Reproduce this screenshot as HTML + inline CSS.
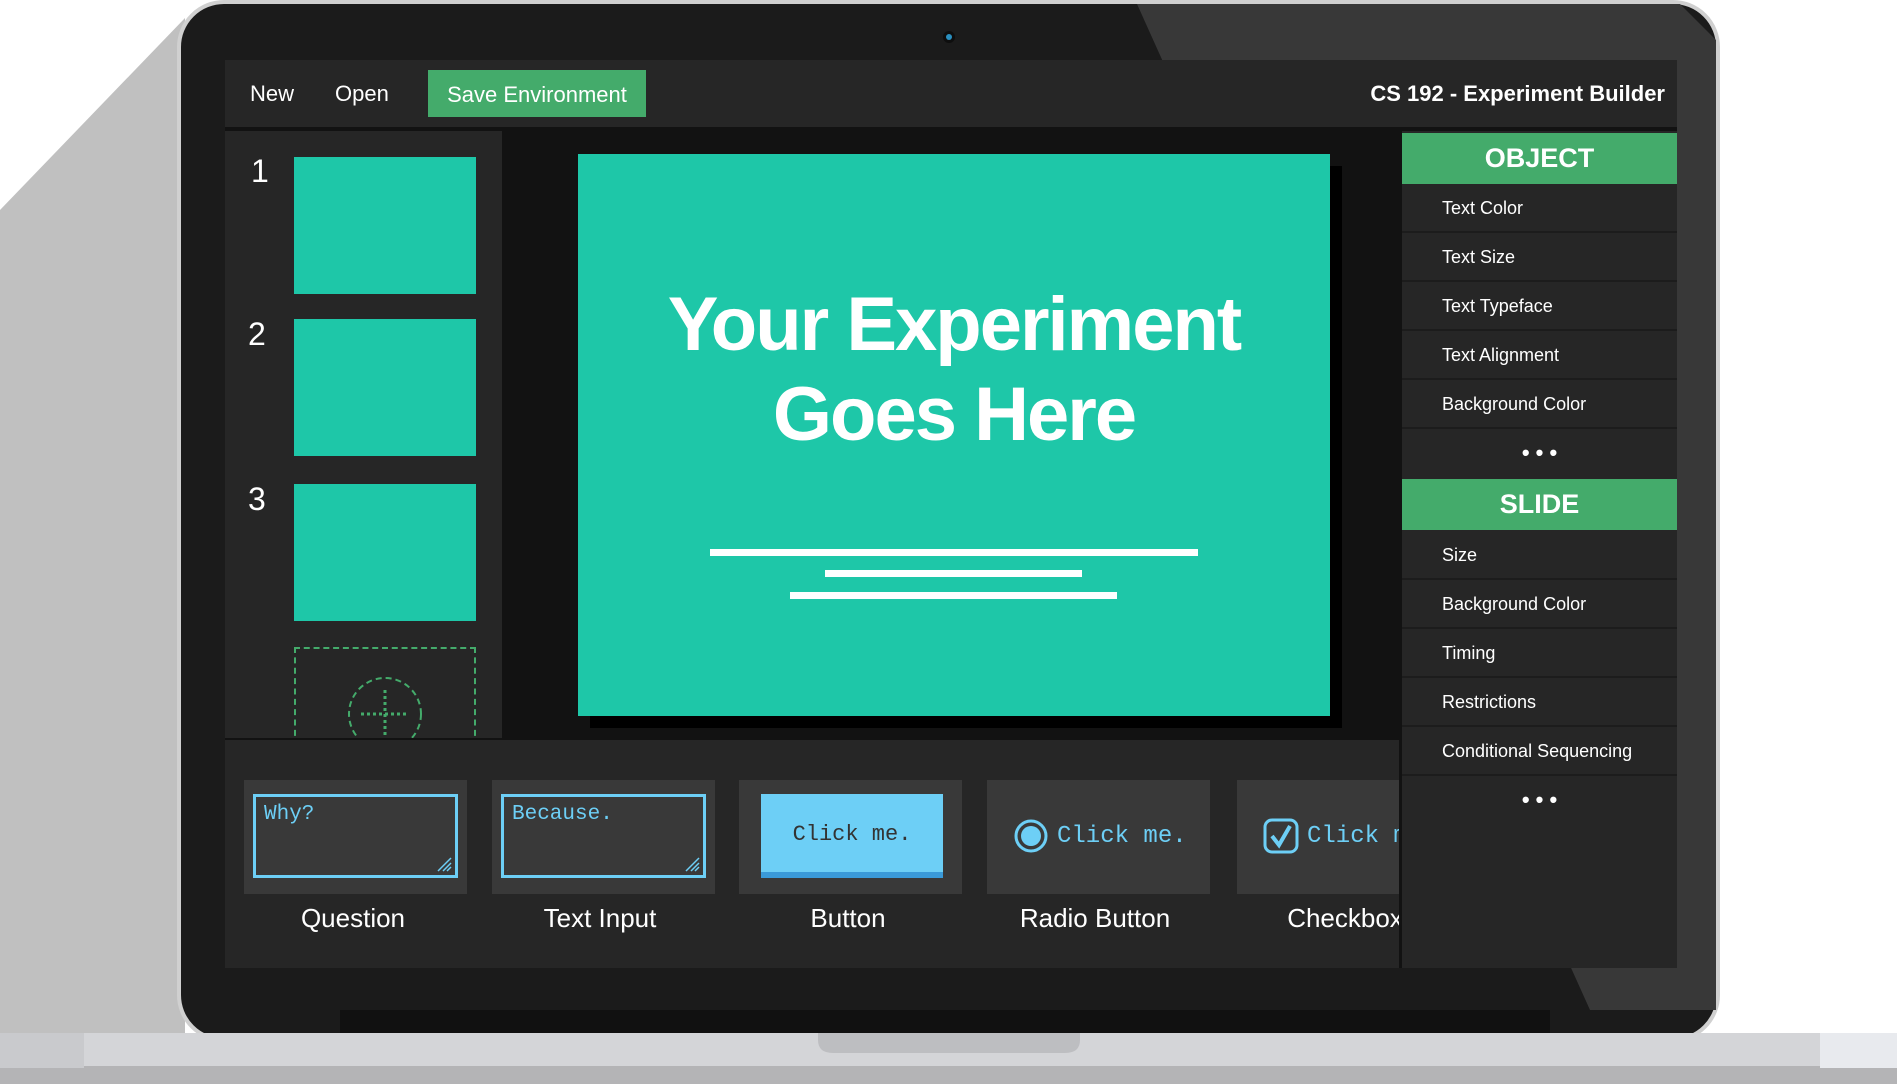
<!DOCTYPE html>
<html><head><meta charset="utf-8"><style>
*{margin:0;padding:0;box-sizing:border-box}
body{width:1897px;height:1084px;background:#fff;position:relative;overflow:hidden;font-family:"Liberation Sans",sans-serif;color:#fff}
.a{position:absolute}
.mono{font-family:"Liberation Mono",monospace;color:#6dcff6}
.row{position:absolute;left:0;width:275px;height:49px;border-bottom:2px solid #1c1c1c;font-size:18px;line-height:49px;padding-left:40px}
.card{position:absolute;top:780px;width:223px;height:114px;background:#393939}
.lbl{position:absolute;top:903px;width:250px;text-align:center;font-size:26px}
</style></head><body>
<svg class="a" style="left:0;top:0" width="1897" height="1084">
<polygon points="185,18 0,210 0,1040 185,1040" fill="#c0c0c0"/>
<rect x="179" y="2" width="1539" height="1038" rx="45" fill="#1b1b1b" stroke="#d0d0d0" stroke-width="4"/>
<polygon points="1137,4 1680,4 1716,40 1716,1010 1590,1010" fill="#383838"/>
<rect x="0" y="1033" width="1897" height="35" fill="#d4d5d8"/>
<rect x="0" y="1066" width="1897" height="18" fill="#b4b4b6"/>
<rect x="0" y="1033" width="84" height="35" fill="#c9cacd"/>
<rect x="1820" y="1033" width="77" height="35" fill="#e8eaee"/>
<path d="M818,1033 H1080 V1040 Q1080,1053 1065,1053 H833 Q818,1053 818,1040Z" fill="#bdbec1"/>
<rect x="340" y="1010" width="1210" height="23" fill="#111"/>
<circle cx="949" cy="37" r="6" fill="#0e0e0e"/><circle cx="949" cy="37" r="3" fill="#2a8fbf"/>
</svg>
<div class="a" style="left:225px;top:60px;width:1452px;height:908px;background:#121212"></div>
<div class="a" style="left:225px;top:60px;width:1452px;height:67px;background:#262626"></div>
<div class="a" style="left:250px;top:81px;font-size:22px">New</div>
<div class="a" style="left:335px;top:81px;font-size:22px">Open</div>
<div class="a" style="left:428px;top:70px;width:218px;height:47px;background:#44ab6b;font-size:22px;line-height:49px;text-align:center">Save Environment</div>
<div class="a" style="right:232px;top:81px;font-size:22px;font-weight:bold">CS 192 - Experiment Builder</div>
<div class="a" style="left:225px;top:131px;width:277px;height:607px;background:#262626;overflow:hidden">
<div class="a" style="left:26px;top:22px;font-size:32px">1</div>
<div class="a" style="left:23px;top:185px;font-size:32px">2</div>
<div class="a" style="left:23px;top:350px;font-size:32px">3</div>
<div class="a" style="left:69px;top:26px;width:182px;height:137px;background:#1ec7a8"></div>
<div class="a" style="left:69px;top:188px;width:182px;height:137px;background:#1ec7a8"></div>
<div class="a" style="left:69px;top:353px;width:182px;height:137px;background:#1ec7a8"></div>
<div class="a" style="left:69px;top:516px;width:182px;height:120px;border:2px dashed #44ab6b"></div>
<svg class="a" style="left:122px;top:545px" width="76" height="76"><circle cx="38" cy="38" r="36" fill="none" stroke="#44ab6b" stroke-width="2" stroke-dasharray="6 4"/><path d="M38 14V62M14 38H62" stroke="#44ab6b" stroke-width="3" stroke-dasharray="3 3"/></svg>
</div>
<div class="a" style="left:590px;top:166px;width:752px;height:562px;background:#000"></div>
<div class="a" style="left:578px;top:154px;width:752px;height:562px;background:#1ec7a8"></div>
<div class="a" style="left:578px;top:280px;width:752px;text-align:center;font-size:76px;font-weight:bold;line-height:90px;letter-spacing:-2px">Your Experiment<br>Goes Here</div>
<div class="a" style="left:710px;top:549px;width:488px;height:7px;background:#fff"></div>
<div class="a" style="left:825px;top:570px;width:257px;height:7px;background:#fff"></div>
<div class="a" style="left:790px;top:592px;width:327px;height:7px;background:#fff"></div>
<div class="a" style="left:1402px;top:131px;width:275px;height:837px;background:#262626">
<div class="a" style="left:0;top:2px;width:275px;height:51px;background:#44ab6b;font-size:27px;font-weight:bold;text-align:center;line-height:51px">OBJECT</div>
<div class="row" style="top:53px">Text Color</div>
<div class="row" style="top:102px">Text Size</div>
<div class="row" style="top:151px">Text Typeface</div>
<div class="row" style="top:200px">Text Alignment</div>
<div class="row" style="top:249px">Background Color</div>
<div class="a" style="left:0;top:317px;width:275px;text-align:center;font-size:22px;font-weight:bold;line-height:10px">• • •</div>
<div class="a" style="left:0;top:348px;width:275px;height:51px;background:#44ab6b;font-size:27px;font-weight:bold;text-align:center;line-height:51px">SLIDE</div>
<div class="row" style="top:400px">Size</div>
<div class="row" style="top:449px">Background Color</div>
<div class="row" style="top:498px">Timing</div>
<div class="row" style="top:547px">Restrictions</div>
<div class="row" style="top:596px">Conditional Sequencing</div>
<div class="a" style="left:0;top:664px;width:275px;text-align:center;font-size:22px;font-weight:bold;line-height:10px">• • •</div>
</div>
<div class="a" style="left:225px;top:740px;width:1174px;height:228px;background:#262626;overflow:hidden">
<div class="card" style="left:19px;top:40px"><div class="a mono" style="left:9px;top:14px;width:205px;height:84px;border:3px solid #6dcff6;padding:6px 8px;font-size:21px">Why?<svg class="a" style="right:3px;bottom:3px" width="16" height="16"><path d="M2 15L15 2M7 15L15 7M11 15L15 11" stroke="#6dcff6" stroke-width="1.5"/></svg></div></div>
<div class="card" style="left:267px;top:40px"><div class="a mono" style="left:9px;top:14px;width:205px;height:84px;border:3px solid #6dcff6;padding:6px 8px;font-size:21px">Because.<svg class="a" style="right:3px;bottom:3px" width="16" height="16"><path d="M2 15L15 2M7 15L15 7M11 15L15 11" stroke="#6dcff6" stroke-width="1.5"/></svg></div></div>
<div class="card" style="left:514px;top:40px"><div class="a mono" style="left:22px;top:14px;width:182px;height:84px;background:#6dcff6;border-bottom:6px solid #3a9ad9;color:#333;font-size:22px;text-align:center;line-height:82px">Click me.</div></div>
<div class="card" style="left:762px;top:40px"><svg class="a" style="left:26px;top:38px" width="36" height="36"><circle cx="18" cy="18" r="15" fill="none" stroke="#6dcff6" stroke-width="3"/><circle cx="18" cy="18" r="10" fill="#6dcff6"/></svg><div class="a mono" style="left:70px;top:43px;font-size:24px">Click me.</div></div>
<div class="card" style="left:1012px;top:40px"><svg class="a" style="left:26px;top:38px" width="36" height="36"><rect x="2" y="2" width="32" height="32" rx="7" fill="none" stroke="#6dcff6" stroke-width="3"/><path d="M9 18 L16 27 L27 8" fill="none" stroke="#6dcff6" stroke-width="4"/></svg><div class="a mono" style="left:70px;top:43px;font-size:24px">Click me.</div></div>
<div class="lbl" style="left:3px;top:163px">Question</div>
<div class="lbl" style="left:250px;top:163px">Text Input</div>
<div class="lbl" style="left:498px;top:163px">Button</div>
<div class="lbl" style="left:745px;top:163px">Radio Button</div>
<div class="lbl" style="left:995px;top:163px">Checkbox</div>
</div>
</body></html>
